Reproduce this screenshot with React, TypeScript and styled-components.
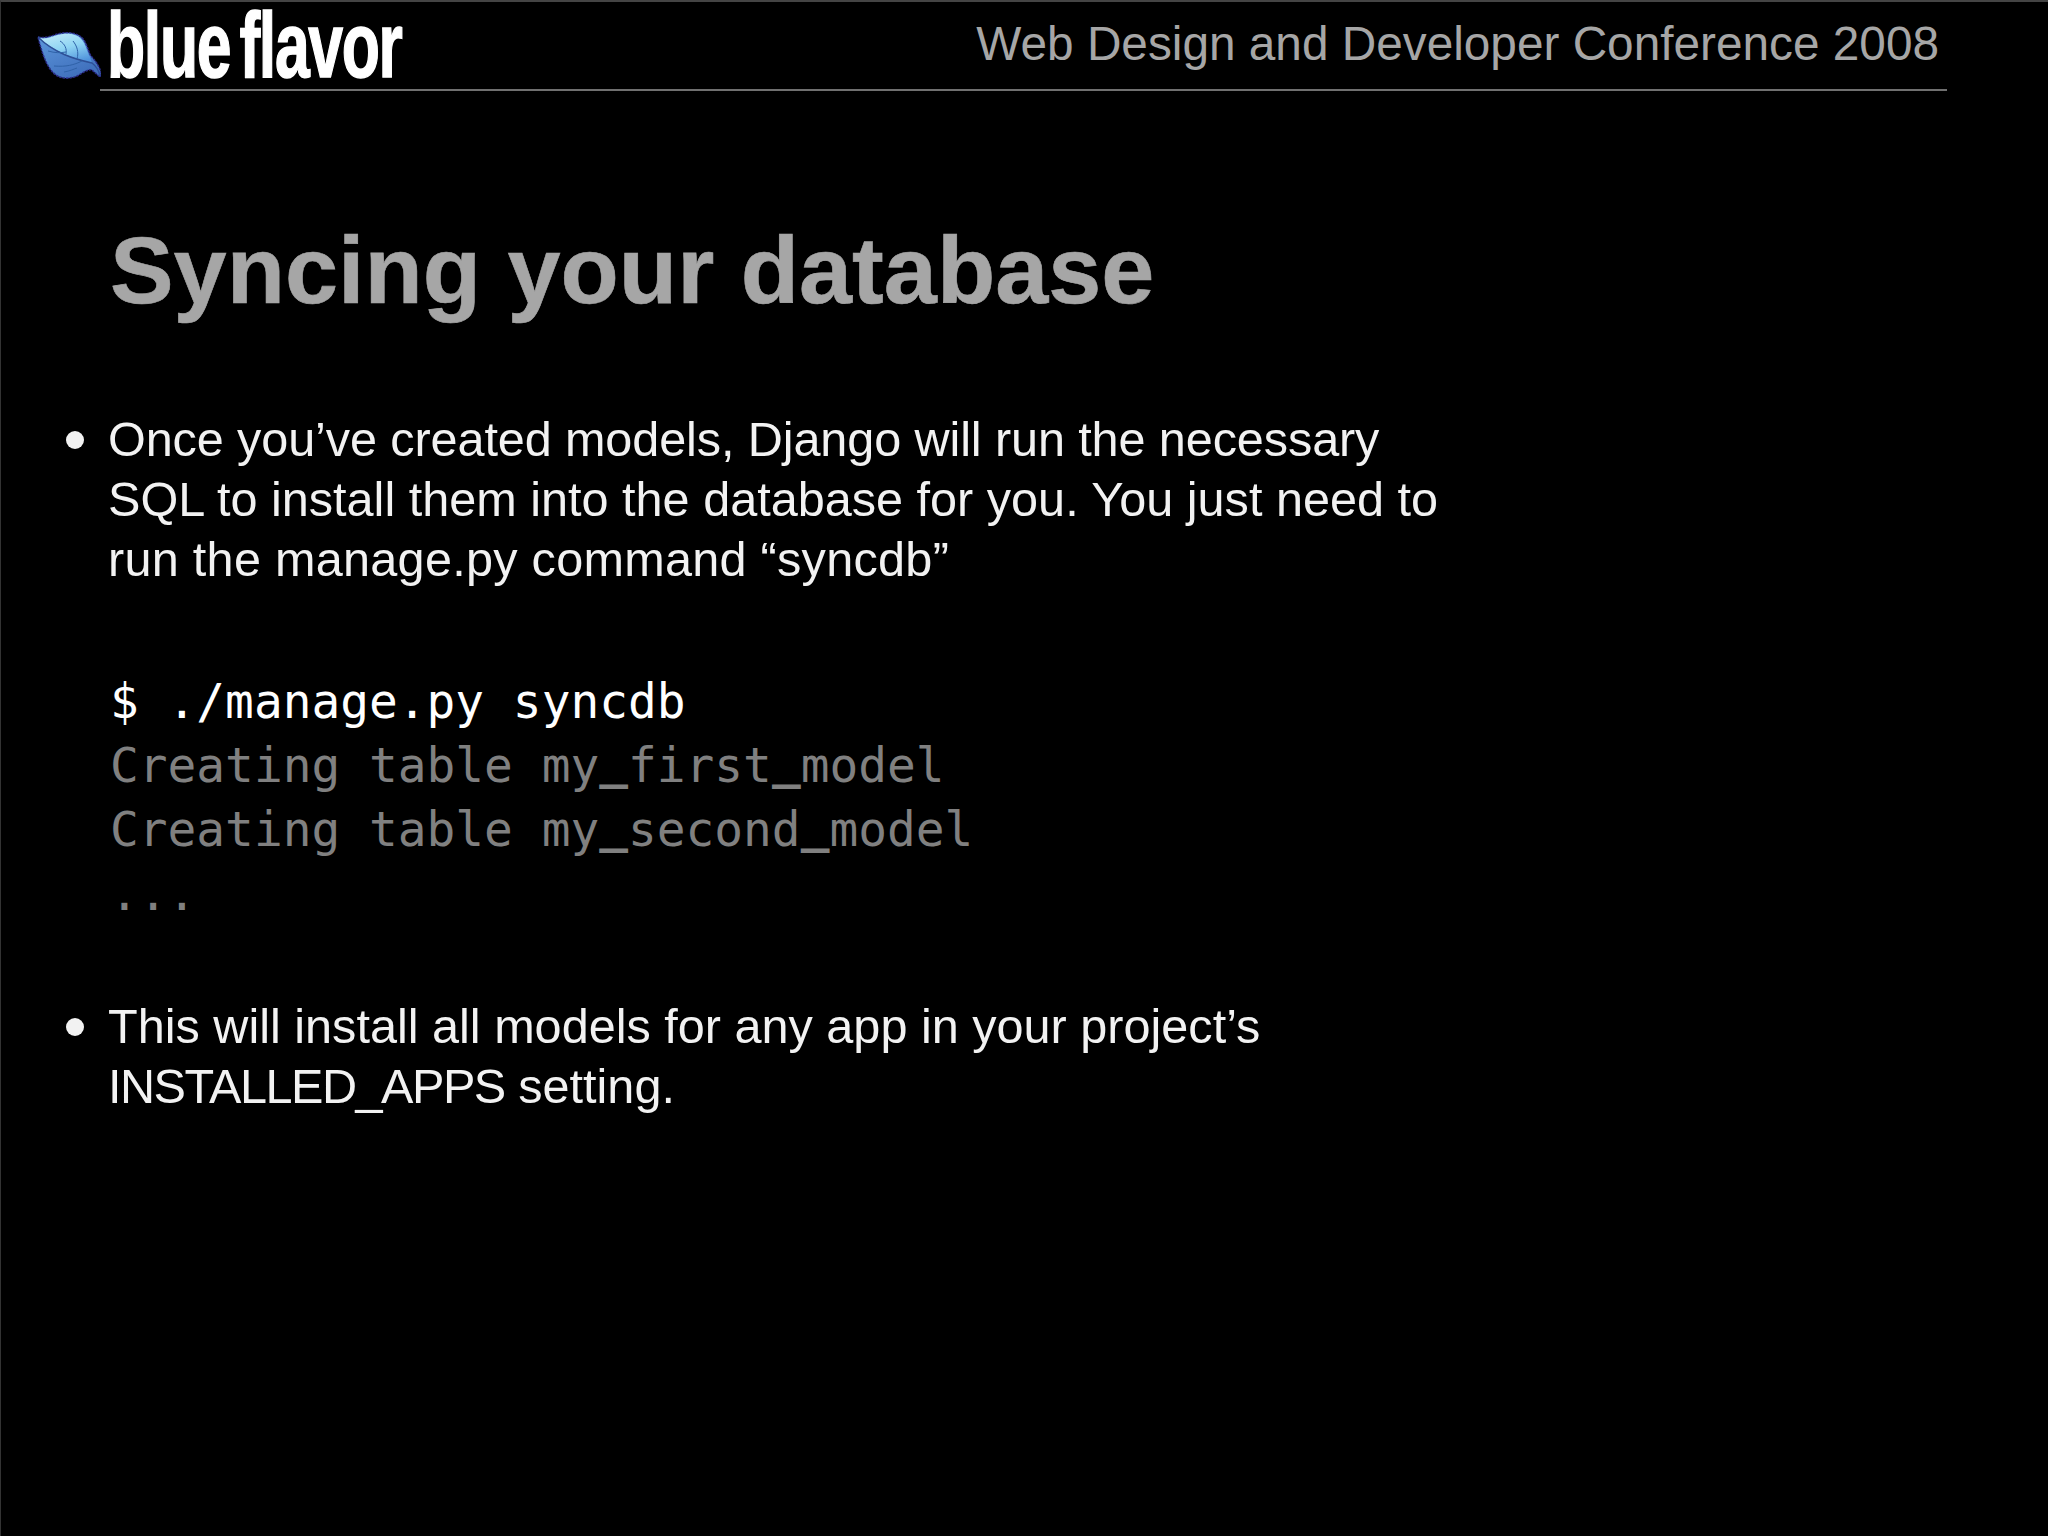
import React from "react";
import styled, { createGlobalStyle } from "styled-components";

const GlobalStyle = createGlobalStyle`
  html, body {
    margin: 0;
    padding: 0;
    background: #000;
  }
`;

const Slide = styled.div`
  width: 2048px;
  height: 1536px;
  box-sizing: border-box;
  background: #000;
  border-top: 2px solid #444;
  border-left: 1px solid #333;
  overflow: hidden;
  font-family: "Liberation Sans", Arial, sans-serif;
`;

const Header = styled.header`
  display: flex;
  align-items: flex-end;
  width: 1946px;
  padding-left: 29px;
  box-sizing: border-box;
`;

const Leaf = styled.svg`
  width: 71px;
  height: 60px;
  flex: none;
  margin-bottom: 6px;
`;

const HeaderBar = styled.div`
  flex: 1;
  display: flex;
  justify-content: space-between;
  height: 87px;
  margin-left: -1px;
  border-bottom: 2px solid #707070;
`;

const Wordmark = styled.div`
  font-weight: 700;
  font-size: 92px;
  line-height: 87px;
  letter-spacing: -2px;
  word-spacing: -10px;
  color: #fff;
  white-space: nowrap;
  -webkit-text-stroke: 1.5px #fff;
  transform: scaleX(0.68);
  transform-origin: left center;
  margin-left: 7px;
`;

const Conference = styled.div`
  font-size: 47.75px;
  line-height: 52px;
  padding-top: 16px;
  padding-right: 8px;
  color: #a6a6a6;
  white-space: nowrap;
`;

const Content = styled.main`
  padding: 0 0 0 107px;
`;

const Title = styled.h1`
  margin: 0 0 0 2px;
  padding-top: 127px;
  font-size: 95.4px;
  line-height: 104px;
  font-weight: 700;
  color: #a6a6a6;
  -webkit-text-stroke: 0.6px #a6a6a6;
`;

const BulletList = styled.ul<{ $top: number }>`
  list-style: none;
  margin: ${(p) => p.$top}px 0 0;
  padding: 0;
`;

const Bullet = styled.li`
  position: relative;
  font-size: 48.6px;
  line-height: 60px;
  color: #f2f2f2;

  &::before {
    content: "";
    position: absolute;
    left: -42px;
    top: 22px;
    width: 18px;
    height: 18px;
    border-radius: 50%;
    background: #f2f2f2;
  }
`;

const BulletLine = styled.div<{ $tracking?: number }>`
  letter-spacing: ${(p) => p.$tracking ?? 0}px;
  white-space: nowrap;
`;

const Constant = styled.span`
  letter-spacing: -1.5px;
`;

const Code = styled.pre`
  margin: 81px 0 0 2px;
  font-family: "DejaVu Sans Mono", monospace;
  font-size: 47.8px;
  line-height: 64px;
`;

const CodeLine = styled.div<{ $muted?: boolean }>`
  color: ${(p) => (p.$muted ? "#808080" : "#fff")};
`;

const Underscore = styled.span`
  display: inline-block;
  line-height: 1;
  font-weight: 700;
  transform: translateY(-4px);
`;

function LeafIcon() {
  return (
    <Leaf viewBox="0 0 71 60">
      <defs>
        <linearGradient id="leafTop" x1="0.2" y1="0" x2="0.7" y2="1">
          <stop offset="0" stopColor="#bfeaf8" />
          <stop offset="0.5" stopColor="#8fd4f3" />
          <stop offset="1" stopColor="#4f93dc" />
        </linearGradient>
        <linearGradient id="leafBottom" x1="0" y1="0" x2="0.6" y2="1">
          <stop offset="0" stopColor="#5f9ade" />
          <stop offset="1" stopColor="#3f6fbc" />
        </linearGradient>
      </defs>
      <path
        d="M8 12 C18 14 24 9 33 8 C42 7 51 9 55 17 C58 23 59 28 61 31 C65 35 70 42 71 48 L70 52 L62 45 C58 44 54 47 47 51 C40 54 32 54 26 50 C17 44 12 28 8 12 Z"
        fill="url(#leafBottom)"
        stroke="#2c2c8a"
        strokeWidth="1.5"
        strokeDasharray="2.5 1"
      />
      <path
        d="M9 13 C18 15 24 10 33 9 C42 8 50 10 54 18 C57 24 58 29 60 32 L62 38 C44 34 24 26 9 13 Z"
        fill="url(#leafTop)"
      />
      <path d="M8 12 C24 28 44 34 62 38 C66 41 69 46 70 51" fill="none" stroke="#2d4f96" strokeWidth="1.4" />
      <path
        d="M30 16 C35 19 37 24 36 29 M43 16 C47 21 49 27 47 34 M18 26 C25 28 30 28 36 27 M24 41 C36 42 44 40 52 36 M34 47 C40 46 44 44 47 43"
        fill="none"
        stroke="#2f62a8"
        strokeWidth="1"
      />
    </Leaf>
  );
}

export default function App() {
  return (
    <Slide>
      <GlobalStyle />
      <Header>
        <LeafIcon />
        <HeaderBar>
          <Wordmark>blue flavor</Wordmark>
          <Conference>Web Design and Developer Conference 2008</Conference>
        </HeaderBar>
      </Header>
      <Content>
        <Title>Syncing your database</Title>
        <BulletList $top={87}>
          <Bullet>
            <BulletLine $tracking={-0.11}>Once you’ve created models, Django will run the necessary</BulletLine>
            <BulletLine>SQL to install them into the database for you. You just need to</BulletLine>
            <BulletLine $tracking={0.27}>run the manage.py command “syncdb”</BulletLine>
          </Bullet>
        </BulletList>
        <Code>
          <CodeLine>$ ./manage.py syncdb</CodeLine>
          <CodeLine $muted>Creating table my<Underscore>_</Underscore>first<Underscore>_</Underscore>model</CodeLine>
          <CodeLine $muted>Creating table my<Underscore>_</Underscore>second<Underscore>_</Underscore>model</CodeLine>
          <CodeLine $muted>...</CodeLine>
        </Code>
        <BulletList $top={70}>
          <Bullet>
            <BulletLine>This will install all models for any app in your project’s</BulletLine>
            <BulletLine><Constant>INSTALLED_APPS</Constant> setting.</BulletLine>
          </Bullet>
        </BulletList>
      </Content>
    </Slide>
  );
}
